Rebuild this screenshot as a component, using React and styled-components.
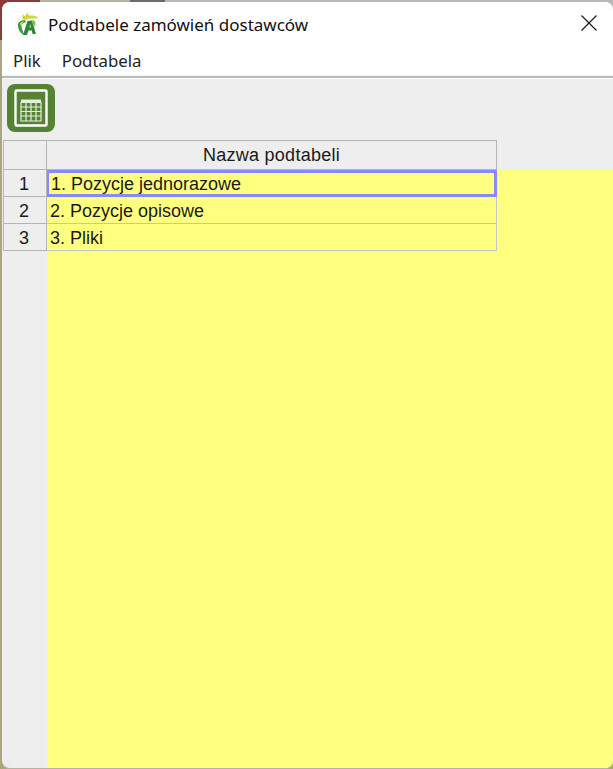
import styled, { createGlobalStyle } from "styled-components";

const GlobalStyle = createGlobalStyle`
  html, body {
    margin: 0;
    padding: 0;
    height: 100%;
    overflow: hidden;
  }
  body {
    background: linear-gradient(90deg, #8f3a3a 0 40px, #b8b4a8 40px 130px, #6b6b6b 130px 165px, #b9b9b9 165px);
  }
  #root {
    height: 100%;
  }
`;

const Desktop = styled.div`
  height: 769px;
  padding: 2px 0 0 2px;
  box-sizing: border-box;
  background: linear-gradient(180deg, transparent 0 40px, #a9a87c 40px);
`;

const Window = styled.div`
  height: 766px;
  display: flex;
  flex-direction: column;
  background: #eeeeee;
  border-radius: 8px;
  overflow: hidden;
  border-bottom: 1px solid #b4b4a0;
`;

const TitleBar = styled.div`
  height: 42px;
  display: flex;
  align-items: center;
  background: #fff;
  padding: 2px 16px 0 13px;
  box-sizing: border-box;
  flex: none;
`;

const AppIcon = styled.svg`
  width: 24px;
  height: 24px;
  flex: none;
`;

const Title = styled.div`
  margin-left: 9px;
  flex: 1;
  font: 17px "Noto Sans", sans-serif;
  color: #111;
`;

const CloseIcon = styled.svg`
  width: 16px;
  height: 16px;
  flex: none;
  margin-top: -2px;
`;

const MenuBar = styled.div`
  height: 32px;
  display: flex;
  align-items: center;
  gap: 21px;
  background: #fff;
  padding: 2px 0 0 11px;
  box-sizing: border-box;
  border-bottom: 1px solid #f4f4f4;
  flex: none;
  font: 16.8px "Noto Sans", sans-serif;
  color: #222;
`;

const Divider = styled.div`
  height: 2px;
  background: #b9b9b9;
  border-bottom: 1px solid #fff;
  flex: none;
`;

const Toolbar = styled.div`
  height: 61px;
  padding: 5px 0 0 5px;
  box-sizing: border-box;
  flex: none;
`;

const ToolButton = styled.button`
  width: 48px;
  height: 48px;
  padding: 0;
  border: 0;
  border-radius: 8px;
  background: #568234;
  display: flex;
  align-items: center;
  justify-content: center;
`;

const SheetIcon = styled.svg`
  width: 34px;
  height: 38px;
`;

const TablePane = styled.div`
  flex: 1;
  display: grid;
  grid-template-columns: 44px 1fr;
  grid-template-rows: 30px 1fr;
  font: 18px "Liberation Sans", Arial, sans-serif;
  color: #1a1a1a;
  padding-left: 1px;
`;

const HeaderCell = styled.div`
  box-sizing: border-box;
  background: #eeeeee;
  border: 1px solid #b5b5b5;
  border-left-width: ${({ $first }) => ($first ? "1px" : "0")};
  width: ${({ $width }) => $width};
  height: 30px;
  letter-spacing: 0.25px;
  display: flex;
  align-items: center;
  justify-content: center;
`;

const RowHeaders = styled.div`
  display: flex;
  flex-direction: column;
`;

const RowHeader = styled.div`
  box-sizing: border-box;
  height: 27px;
  padding: 3px 2px 0 0;
  border: 1px solid #b5b5b5;
  border-top: 0;
  display: flex;
  align-items: center;
  justify-content: center;
`;

const Rows = styled.div`
  background: #ffff80;
  display: flex;
  flex-direction: column;
`;

const Row = styled.div`
  box-sizing: border-box;
  width: 450px;
  height: 27px;
  padding: ${({ $active }) => ($active ? "2px 0 0 2px" : "3px 0 0 3px")};
  display: flex;
  align-items: center;
  overflow: hidden;
  border: solid #c4c4c4;
  border-width: 0 1px 1px 0;
  ${({ $active }) => $active && "border: solid #8a8aff; border-width: 3px 3px 3px 2px;"}
`;

const subtables = ["1. Pozycje jednorazowe", "2. Pozycje opisowe", "3. Pliki"];

export default function App() {
  return (
    <Desktop>
      <GlobalStyle />
      <Window>
        <TitleBar>
          <AppIcon viewBox="0 0 24 24">
            <path d="M7 7 L8 2 L10 4.5 L12 0.5 L14 3.5 L18 3.5 L23 5 L22 6.5 L15 6.5 L10 8 Z" fill="#cdd838" />
            <path d="M10 8 C5 8 2.5 11 3 14 C3.5 18 5 21 9 23 L6.5 15 C6 12 8 10.5 11 10.5 Z" fill="#3f9a3c" />
            <path d="M5 12 C5.5 10.5 7 9.5 9 9.2 L7 11.5 L6.5 14.5 Z" fill="#d6e26a" />
            <path d="M8 23 L12.5 9 L17 8.5 L21 22 L17.5 22 L16.8 18.5 L13.5 18.5 L12 23 Z" fill="#2f8436" />
            <path d="M14.2 15.5 L15.2 12 L16.2 15.5 Z" fill="#c4e27e" />
            <path d="M17 8 C20 8 21 11 20 15 L18.4 12 Z" fill="#79b84a" />
          </AppIcon>
          <Title>Podtabele zamówień dostawców</Title>
          <CloseIcon viewBox="0 0 16 16">
            <path d="M0.5 0.5 L15.5 15.5 M15.5 0.5 L0.5 15.5" stroke="#1a1a1a" strokeWidth="1.2" fill="none" />
          </CloseIcon>
        </TitleBar>
        <MenuBar>
          <span>Plik</span>
          <span>Podtabela</span>
        </MenuBar>
        <Divider />
        <Toolbar>
          <ToolButton>
            <SheetIcon viewBox="0 0 34 38">
              <rect x="1.5" y="1.5" width="31" height="35" rx="1" fill="none" stroke="#fff" strokeWidth="2.4" />
              <path
                d="M7 13.5 H27 V32 H7 Z M7 18 H27 M7 22.5 H27 M7 27 H27 M12 13.5 V32 M17 13.5 V32 M22 13.5 V32"
                fill="none"
                stroke="#e6eede"
                strokeWidth="1.2"
              />
              <rect x="7" y="10.5" width="20" height="3.5" fill="#e6eede" />
            </SheetIcon>
          </ToolButton>
        </Toolbar>
        <TablePane>
          <HeaderCell $first $width="44px" />
          <HeaderCell $width="450px">Nazwa podtabeli</HeaderCell>
          <RowHeaders>
            {subtables.map((_, i) => (
              <RowHeader key={i}>{i + 1}</RowHeader>
            ))}
          </RowHeaders>
          <Rows>
            {subtables.map((name, i) => (
              <Row key={name} $active={i === 0}>
                {name}
              </Row>
            ))}
          </Rows>
        </TablePane>
      </Window>
    </Desktop>
  );
}
